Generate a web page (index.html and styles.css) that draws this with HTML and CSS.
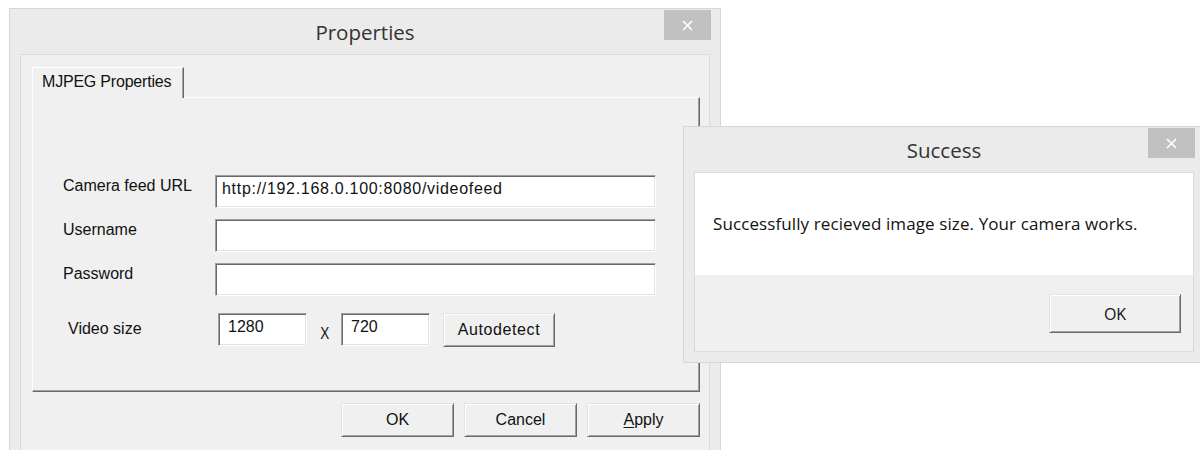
FILE: index.html
```html
<!DOCTYPE html>
<html lang="en">
<head>
<meta charset="utf-8">
<title>Camera properties</title>
<link rel="stylesheet" href="styles.css">
</head>
<body>
<div class="desk">

  <section class="win props">
    <header class="titlebar">
      <span class="title">Properties</span>
      <button class="close" aria-label="Close">
        <svg width="11" height="11" viewBox="0 0 11 11"><path d="M1 1 L10 10 M10 1 L1 10" stroke="#fff" stroke-width="1.6" fill="none"/></svg>
      </button>
    </header>
    <div class="client">
      <div class="tabstrip">
        <div class="tab">MJPEG Properties</div>
      </div>
      <div class="panel">
        <div class="form">
          <label class="lbl">Camera feed URL</label>
          <div class="field url">http://192.168.0.100:8080/videofeed</div>
          <label class="lbl">Username</label>
          <div class="field"></div>
          <label class="lbl">Password</label>
          <div class="field"></div>
        </div>
        <div class="size-row">
          <label class="lbl size-lbl">Video size</label>
          <div class="field small">1280</div>
          <span class="times">X</span>
          <div class="field small">720</div>
          <button class="btn auto">Autodetect</button>
        </div>
      </div>
      <div class="actions">
        <button class="btn">OK</button>
        <button class="btn">Cancel</button>
        <button class="btn"><u>A</u>pply</button>
      </div>
    </div>
  </section>

  <section class="win success">
    <header class="titlebar">
      <span class="title">Success</span>
      <button class="close" aria-label="Close">
        <svg width="11" height="11" viewBox="0 0 11 11"><path d="M1 1 L10 10 M10 1 L1 10" stroke="#fff" stroke-width="1.6" fill="none"/></svg>
      </button>
    </header>
    <div class="client msg-client">
      <div class="message">Successfully recieved image size. Your camera works.</div>
      <div class="msg-footer">
        <button class="btn msg-ok">OK</button>
      </div>
    </div>
  </section>

</div>
</body>
</html>
```

FILE: styles.css
```css
* {
  box-sizing: border-box;
}

html,
body {
  margin: 0;
  height: 100%;
}

body {
  background: #ffffff;
  color: #111;
  font-family: "Liberation Sans", Arial, sans-serif;
  font-size: 16px;
  overflow: hidden;
}

.desk {
  position: relative;
  width: 1200px;
  height: 450px;
  overflow: hidden;
}

/* window frame */
.win {
  position: absolute;
  display: flex;
  flex-direction: column;
  background: #ebebeb;
  border: 1px solid #d6d6d6;
  padding: 0 10px 10px;
}

.props {
  left: 9px;
  top: 8px;
  width: 712px;
  height: 462px;
}

.success {
  left: 683px;
  top: 126px;
  width: 522px;
  height: 237px;
  z-index: 2;
}

.titlebar {
  height: 45px;
  display: grid;
  grid-template-columns: 1fr auto 1fr;
  align-items: center;
}

.title {
  grid-column: 2;
  font-family: "Open Sans", "Noto Sans", sans-serif;
  font-size: 20.5px;
  color: #333;
  padding-top: 1px;
}

.close {
  grid-column: 3;
  justify-self: end;
  align-self: start;
  margin: 1px -1px 0 0;
  width: 47px;
  height: 30px;
  border: 0;
  padding: 0;
  background: #c1c1c1;
  display: flex;
  align-items: center;
  justify-content: center;
}

/* client area */
.client {
  flex: 1;
  background: #f0f0f0;
  border: 1px solid #dadada;
  padding: 12px 9px 0 11px;
  display: flex;
  flex-direction: column;
}

.tabstrip {
  display: flex;
  align-items: flex-end;
  height: 30px;
}

.tab {
  position: relative;
  z-index: 1;
  width: 152px;
  height: 31px;
  margin-bottom: -1px;
  padding: 4px 0 0 9px;
  background: #f0f0f0;
  border-top: 1px solid #fff;
  border-left: 1px solid #fff;
  border-right: 1px solid #696969;
  box-shadow: inset -1px 0 0 #a0a0a0;
  font-size: 16px;
  letter-spacing: -0.2px;
  line-height: 20px;
}

.panel {
  height: 295px;
  border-top: 1px solid #fff;
  border-left: 1px solid #fff;
  border-right: 1px solid #696969;
  border-bottom: 1px solid #696969;
  box-shadow: inset -1px -1px 0 #a0a0a0;
  padding: 77px 0 0 30px;
}

.form {
  display: grid;
  grid-template-columns: 152px 441px;
  grid-auto-rows: 33px;
  row-gap: 11px;
}

.lbl {
  line-height: 20px;
  padding-top: 1px;
}

/* sunken edit box */
.field {
  height: 33px;
  background: #fff;
  border-style: solid;
  border-width: 1px;
  border-color: #a0a0a0 #fff #fff #a0a0a0;
  box-shadow: inset 1px 1px 0 #696969, inset -1px -1px 0 #e3e3e3;
  padding: 3px 0 0 6px;
  line-height: 20px;
  white-space: nowrap;
}

.url {
  letter-spacing: 0.7px;
}

.size-row {
  display: flex;
  align-items: flex-start;
  margin-top: 17px;
}

.size-lbl {
  width: 155px;
  padding: 6px 0 0 5px;
}

.small {
  width: 89px;
  padding-left: 9px;
}

.times {
  width: 34px;
  text-align: center;
  padding-top: 11px;
  padding-left: 2px;
  line-height: 20px;
  font-size: 16px;
  transform: scaleX(0.85);
}

/* raised push button */
.btn {
  font-family: "Liberation Sans", Arial, sans-serif;
  font-size: 16px;
  color: #111;
  width: 113px;
  height: 34px;
  padding: 0;
  background: #f0f0f0;
  border-style: solid;
  border-width: 1px;
  border-color: #e3e3e3 #696969 #696969 #e3e3e3;
  box-shadow: inset 1px 1px 0 #fff, inset -1px -1px 0 #a0a0a0;
}

.btn u {
  text-decoration-thickness: 1px;
  text-underline-offset: 2px;
}

.auto {
  width: 112px;
  margin-left: 13px;
  letter-spacing: 0.6px;
}

.actions {
  display: flex;
  justify-content: flex-end;
  gap: 10px;
  margin-top: 11px;
}

/* message box */
.msg-client {
  padding: 0;
}

.message {
  height: 102px;
  background: #fff;
  padding: 40px 0 0 18px;
  font-family: "Open Sans", "Noto Sans", sans-serif;
  font-size: 17px;
  line-height: 22px;
  letter-spacing: 0.1px;
  color: #111;
}

.msg-footer {
  flex: 1;
  display: flex;
  justify-content: flex-end;
  align-items: flex-start;
  padding: 19px 12px 0 0;
}

.msg-ok {
  width: 132px;
  height: 39px;
  font-family: "Open Sans", "Noto Sans", sans-serif;
  font-size: 16px;
}
```
